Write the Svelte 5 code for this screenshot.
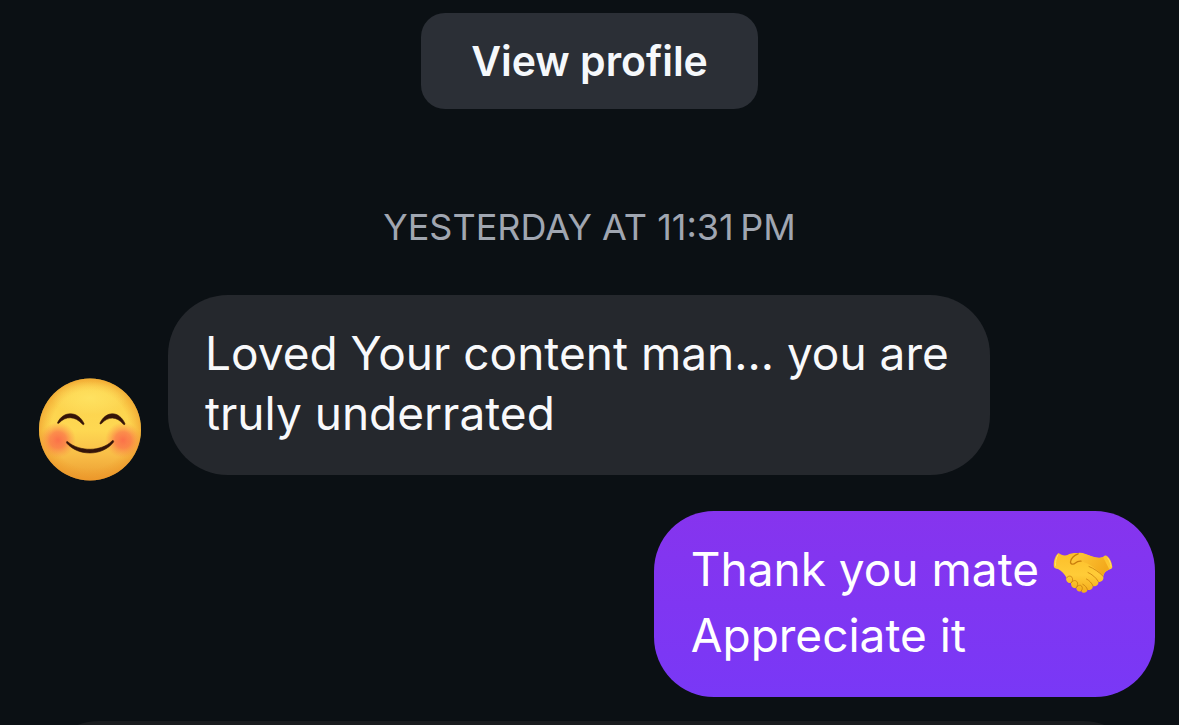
<script>
	const timestamp = 'Yesterday at 11:31\u202fPM';

	let draft = $state('');
</script>

<main class="chat">
	<button class="profile" type="button">View profile</button>

	<time class="stamp">{timestamp}</time>

	<div class="row">
		<svg class="avatar" viewBox="0 0 102 103" role="img" aria-label="Smiling face">
			<defs>
				<linearGradient id="face" x1="0" y1="0" x2="0" y2="1">
					<stop offset="0" stop-color="#fbcf4a" />
					<stop offset="0.5" stop-color="#fed852" />
					<stop offset="0.75" stop-color="#f8bd47" />
					<stop offset="1" stop-color="#eb9c30" />
				</linearGradient>
				<radialGradient id="edge" cx="0.5" cy="0.5" r="0.5">
					<stop offset="0.76" stop-color="#f09a28" stop-opacity="0" />
					<stop offset="1" stop-color="#ec9427" stop-opacity="0.6" />
				</radialGradient>
				<radialGradient id="shine">
					<stop offset="0" stop-color="#ffe565" stop-opacity="0.8" />
					<stop offset="0.5" stop-color="#ffe463" stop-opacity="0.5" />
					<stop offset="1" stop-color="#ffe36a" stop-opacity="0" />
				</radialGradient>
				<radialGradient id="blush">
					<stop offset="0" stop-color="#fb5a48" stop-opacity="0.8" />
					<stop offset="0.45" stop-color="#fb6649" stop-opacity="0.65" />
					<stop offset="1" stop-color="#fb8a45" stop-opacity="0" />
				</radialGradient>
			</defs>
			<circle cx="51" cy="51.5" r="51" fill="url(#face)" />
			<circle cx="51" cy="51.5" r="51" fill="url(#edge)" />
			<ellipse cx="51" cy="20" rx="38" ry="17" fill="url(#shine)" />
			<circle cx="19" cy="62" r="18" fill="url(#blush)" />
			<circle cx="84" cy="62" r="18" fill="url(#blush)" />
			<g fill="#351408" stroke="#351408" stroke-width="0.6">
				<path d="M18.6 44.6C24 32.8 39 32.5 45 45.5C45.4 46.5 44.3 47.1 43.5 46.2C36 37.9 27 37.7 20 45C19.2 45.8 18.2 45.5 18.6 44.6Z" />
				<path d="M61 45C67 32.6 80 32.6 85.9 45.4C86.3 46.6 85.2 47.1 84.4 46.2C77.5 38.2 69.5 38.1 62.5 45.5C61.6 46.3 60.6 46 61 45Z" />
				<path d="M29 64C41 73.9 62 73.8 73 63C74 61.9 75.2 62.8 74.4 64.2C63.5 78.5 39 78.3 27.8 65.2C27 63.8 27.9 63 29 64Z" />
			</g>
		</svg>
		<p class="bubble received">Loved Your content man... you are truly underrated</p>
	</div>

	<div class="row own">
		<p class="bubble sent">
			<span class="line">
				Thank you mate
				<svg class="shake" viewBox="0 0 60 42" role="img" aria-label="Handshake">
					<defs>
						<linearGradient id="hand" x1="0" y1="0" x2="0" y2="1">
							<stop offset="0" stop-color="#fcbf2a" />
							<stop offset="0.55" stop-color="#ffcc38" />
							<stop offset="1" stop-color="#f3ab1b" />
						</linearGradient>
						<linearGradient id="arm" x1="0" y1="0" x2="1" y2="0.4">
							<stop offset="0" stop-color="#ffcb3c" />
							<stop offset="1" stop-color="#f3a91c" />
						</linearGradient>
					</defs>
					<path fill="url(#hand)" d="M5.5 1C2.4 3.4.4 9 .8 14.2C1 16.4 3 16.3 5 17.1C9 19.4 11.4 22 13.4 25.5C12.3 28.8 15 31.6 18 31C17.8 34.5 20 36.8 23.2 36C23.4 38.5 25.8 40.6 28.2 38.9C29.4 41.8 33.9 41.3 34.4 38C38.3 38.7 40.2 36 39.6 34.2C43.3 34.9 46 32.2 45.3 30C48.6 30.3 51.2 27.7 50.2 24.5C50.7 21.2 52.6 18.8 56.4 17.5C58.8 16.8 59.7 15.8 59.2 14.2C58.6 9.8 56.7 6.2 54.3 4.2C52.7 2.9 51.3 3.9 49.8 5C47 6.8 42.5 5.8 38 4.2C34 2.5 29 .2 25.3 1C21 .8 17 1.3 14.5 3C11.2 4.3 8.3 2.8 5.5 1Z" />
					<path fill="url(#arm)" d="M26 1.3C21.8 2 18.3 6.5 17.5 9.5C16.9 12.2 20 13 22.1 11C24.7 8.7 27.4 8.8 30.5 9.9C37 12 43.5 17 50 24C51 20.6 53 18.5 56.4 17.5L50 5C43 8 34 1 26 1.3Z" />
					<g fill="none" stroke="#c97d0c" stroke-linecap="round">
						<path d="M25.2 1.8C21 3 18.2 6.8 17.6 9.3C17 12.3 20.3 13 22.4 11C24.2 9.4 26 9 28 9.2" stroke-width="1.3" />
						<path d="M36 14.5C41 16.5 46 20 49.8 24M35 20.5C39 22.3 43 25.5 45.3 29.5M33.5 27C36.5 28.6 38.8 31 39.9 33.8M29.8 32.3C32 33.4 33.7 35.2 34.4 37.6" stroke-width="0.8" />
						<path d="M13.6 26C15 23.5 17.6 23.7 19 25.3C20.2 27 19.5 29.7 18 31C19.4 28.7 22 27.7 23.8 29.5C25.4 31.3 24.6 34 23.2 35.8C24.6 33.4 27.2 32.5 28.6 34C29.8 35.5 29.4 37.5 28.4 38.8" stroke-width="0.8" />
					</g>
					<path d="M4.8 3C3 6 2.3 9.5 2.5 13.4M54.8 6C56.7 8.5 57.7 11.5 58 14.4" fill="none" stroke="#ffe06a" stroke-width="1" stroke-linecap="round" />
				</svg>
			</span>
			<span class="line">Appreciate it</span>
		</p>
	</div>

	<input class="composer" type="text" aria-label="Message" bind:value={draft} />
</main>

<style>
	:global(body) {
		margin: 0;
		background: #0b1014;
	}

	.chat {
		box-sizing: border-box;
		display: flex;
		flex-direction: column;
		height: 100vh;
		overflow: hidden;
		padding: 13px 24px 0 39px;
		background: #0b1014;
		color: #f8f9fb;
		font-family: Inter, 'Liberation Sans', sans-serif;
	}

	.profile {
		flex: none;
		align-self: center;
		height: 96px;
		margin-right: 15px;
		padding: 0 50px;
		border: 0;
		border-radius: 24px;
		background: #2b2f36;
		color: #f5f8fb;
		font: inherit;
		font-size: 41px;
		font-weight: 600;
		cursor: pointer;
	}

	.stamp {
		align-self: center;
		margin: 96px 15px 0 0;
		color: #a0a6b1;
		font-size: 36px;
		line-height: 44px;
		text-transform: uppercase;
	}

	.row {
		display: flex;
		align-items: flex-end;
		gap: 27px;
		margin-top: 46px;
	}

	.row.own {
		justify-content: flex-end;
		margin-top: 36px;
	}

	.avatar {
		flex: none;
		width: 102px;
		height: 103px;
		margin-bottom: -6px;
	}

	.bubble {
		box-sizing: border-box;
		margin: 0;
		padding: 28px 24px 32px 37px;
		border-radius: 60px;
		font-size: 46px;
		line-height: 60px;
	}

	.received {
		max-width: 822px;
		background: #25282d;
	}

	.sent {
		padding: 25px 42px 29px 37px;
		background: linear-gradient(#8634ee, #7938f6);
		color: #fff;
		line-height: 66px;
	}

	.line {
		display: block;
	}

	.shake {
		width: 60px;
		height: 42px;
		margin-left: 1px;
		vertical-align: -8px;
	}

	.composer {
		flex: none;
		height: 120px;
		margin: 24px 12px 0 0;
		padding: 0 48px;
		border: 0;
		border-radius: 60px;
		background: #191c1f;
		color: inherit;
		font: inherit;
		font-size: 46px;
	}
</style>
